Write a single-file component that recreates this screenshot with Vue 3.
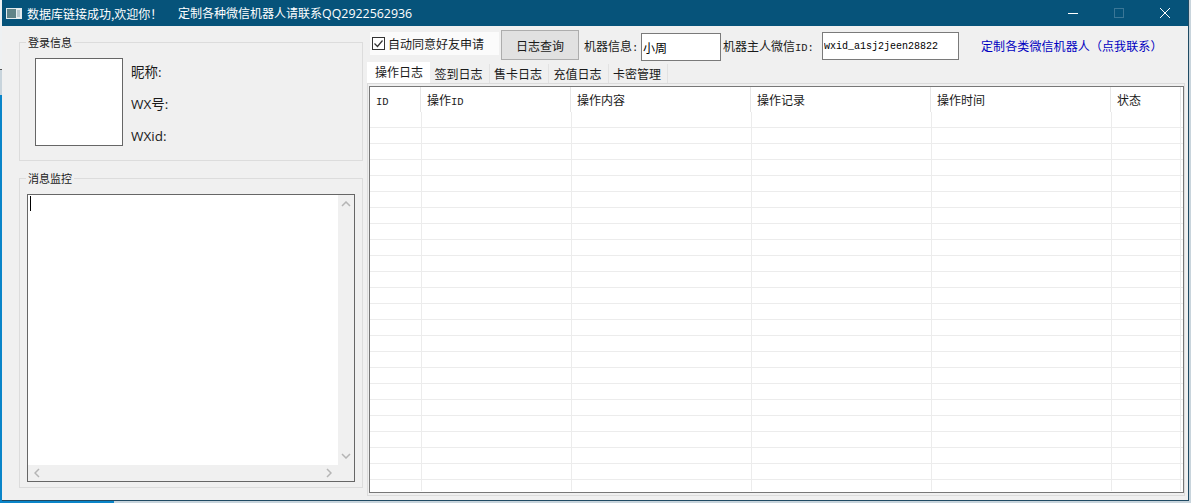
<script setup>
const tabs = ['操作日志', '签到日志', '售卡日志', '充值日志', '卡密管理']
const columns = [
  { label: 'ID', mono: true, width: 52, headWidth: 51 },
  { label: '操作', suffix: 'ID', width: 150, headWidth: 150 },
  { label: '操作内容', width: 180, headWidth: 180 },
  { label: '操作记录', width: 180, headWidth: 180 },
  { label: '操作时间', width: 180, headWidth: 180 },
  { label: '状态', width: 69, headWidth: 70 },
]
const rows = Array.from({ length: 23 }, (_, i) => i)
</script>

<template>
  <div class="desktop">
    <div class="window">
      <header class="titlebar">
        <svg class="app-icon" width="16" height="11" viewBox="0 0 16 11">
          <rect width="16" height="11" fill="#e4ebee" />
          <rect x="1" y="1" width="9" height="9" fill="#5f8388" />
          <rect x="11" y="2" width="3" height="7" fill="#b6c8cf" />
        </svg>
        <span class="title-a">数据库链接成功,欢迎你！</span>
        <span class="title-b">定制各种微信机器人请联系<span class="qq">QQ2922562936</span></span>
        <div class="win-btns">
          <svg width="12" height="12" viewBox="0 0 12 12"><path d="M1 6.5h10" stroke="#fff" /></svg>
          <svg width="12" height="12" viewBox="0 0 12 12"><rect x="1.5" y="1.5" width="9" height="9" fill="none" stroke="#3a7696" /></svg>
          <svg width="12" height="12" viewBox="0 0 12 12"><path d="M1 1l10 10M11 1L1 11" stroke="#fff" /></svg>
        </div>
      </header>

      <div class="body">
        <aside class="left">
          <fieldset class="group login">
            <legend>登录信息</legend>
            <div class="avatar"></div>
            <div class="info">
              <span>昵称:</span>
              <span>WX号:</span>
              <span>WXid:</span>
            </div>
          </fieldset>
          <fieldset class="group monitor">
            <legend>消息监控</legend>
            <div class="textarea">
              <div class="text-main"><i class="caret"></i></div>
              <div class="vbar">
                <svg width="10" height="6" viewBox="0 0 10 6"><path d="M1 5l4-4 4 4" fill="none" stroke="#b5b5b5" stroke-width="1.5" /></svg>
                <svg width="10" height="6" viewBox="0 0 10 6"><path d="M1 1l4 4 4-4" fill="none" stroke="#b5b5b5" stroke-width="1.5" /></svg>
              </div>
              <div class="hbar">
                <svg width="6" height="10" viewBox="0 0 6 10"><path d="M5 1L1 5l4 4" fill="none" stroke="#b5b5b5" stroke-width="1.5" /></svg>
                <svg width="6" height="10" viewBox="0 0 6 10"><path d="M1 1l4 4-4 4" fill="none" stroke="#b5b5b5" stroke-width="1.5" /></svg>
              </div>
            </div>
          </fieldset>
        </aside>

        <main class="right">
          <div class="toolbar">
            <label class="check">
              <svg width="13" height="13" viewBox="0 0 13 13">
                <rect x="0.5" y="0.5" width="12" height="12" fill="#fff" stroke="#333" />
                <path d="M2.5 6.5l3 3 5-6" fill="none" stroke="#333" stroke-width="1.2" />
              </svg>
              自动同意好友申请
            </label>
            <button class="query">日志查询</button>
            <span class="lbl-info">机器信息<em>:</em></span>
            <input class="input name" value="小周" />
            <span class="lbl-owner">机器主人微信<em>ID:</em></span>
            <input class="input wxid" value="wxid_a1sj2jeen28822" />
            <a class="link">定制各类微信机器人（点我联系）</a>
          </div>

          <div class="tabs">
            <div v-for="(t, i) in tabs" :key="t" class="tab" :class="{ active: i === 0 }">{{ t }}</div>
          </div>

          <div class="panel">
            <div class="table">
              <div class="thead">
                <div v-for="c in columns" :key="c.label" class="th" :style="{ width: c.headWidth + 'px' }">
                  <em v-if="c.mono">{{ c.label }}</em>
                  <template v-else>{{ c.label }}<em v-if="c.suffix">{{ c.suffix }}</em></template>
                </div>
              </div>
              <div v-for="r in rows" :key="r" class="tr">
                <div v-for="c in columns" :key="c.label" class="td" :style="{ width: c.width + 'px' }"></div>
              </div>
              <div class="tr filler">
                <div v-for="c in columns" :key="c.label" class="td" :style="{ width: c.width + 'px' }"></div>
              </div>
            </div>
          </div>
        </main>
      </div>
    </div>
  </div>
</template>

<style>
html, body {
  margin: 0;
  background: #c8d4dc;
  overflow: hidden;
}
</style>

<style scoped>
.desktop {
  width: 1191px;
  height: 503px;
  overflow: hidden;
  background:
    linear-gradient(#eef1f3 69px, #555 69px, #555 70px, #c8d4dc 70px, #c8d4dc 95px, #0a85c9 95px) 0 0 / 2px 100% no-repeat,
    linear-gradient(to right, #0a85c9 114px, #c8d4dc 114px);
  font-family: "Noto Sans CJK SC", "Liberation Sans", sans-serif;
  font-size: 12px;
  color: #1a1a1a;
}

.window {
  margin-left: 2px;
  width: 1186px;
  height: 500px;
  background: #f0f0f0;
  border-right: 1px solid #1f4a63;
  border-bottom: 1px solid #1f4a63;
  display: flex;
  flex-direction: column;
}

.titlebar {
  height: 26px;
  padding-left: 4px;
  background: #06537a;
  color: #fff;
  display: flex;
  align-items: center;
  flex-shrink: 0;
}

.app-icon {
  margin-right: 5px;
}

.title-a {
  width: 151px;
}

.qq {
  font-family: "Open Sans", sans-serif;
  font-size: 12.4px;
}

.win-btns {
  margin-left: auto;
  margin-right: 17px;
  display: flex;
  gap: 34px;
}

.body {
  flex: 1;
  display: flex;
  min-height: 0;
}

.left {
  width: 366px;
  padding: 16px 0 0 17px;
  box-sizing: border-box;
  flex-shrink: 0;
}

.group {
  margin: 0;
  padding: 0;
  width: 344px;
  box-sizing: border-box;
  border: 1px solid #dcdcdc;
}

.group legend {
  margin-left: 6px;
  padding: 0 2px;
  font-size: 11px;
  line-height: 14px;
}

.login {
  height: 126px;
  margin-top: -7px;
  display: flex;
}

.avatar {
  width: 86px;
  height: 86px;
  margin: 9px 0 0 15px;
  background: #fff;
  border: 1px solid #666;
  flex-shrink: 0;
}

.info {
  margin: 14px 0 0 8px;
  display: flex;
  flex-direction: column;
  gap: 14px;
  font-size: 13.5px;
  line-height: 18px;
  font-family: "Open Sans", "Noto Sans CJK SC", sans-serif;
}

.monitor {
  height: 317px;
  margin-top: 10px;
}

.textarea {
  width: 326px;
  height: 286px;
  margin: 9px 0 0 7px;
  background: #f0f0f0;
  border: 1px solid #666;
  display: grid;
  grid-template-columns: 1fr 16px;
  grid-template-rows: 1fr 16px;
}

.text-main {
  background: #fff;
  padding: 1px 0 0 2px;
}

.caret {
  display: block;
  width: 1px;
  height: 15px;
  background: #000;
}

.vbar {
  display: flex;
  flex-direction: column;
  justify-content: space-between;
  align-items: center;
  padding: 6px 0 6px;
}

.hbar {
  display: flex;
  justify-content: space-between;
  align-items: center;
  padding: 0 6px;
  grid-column: 1 / 2;
}

.right {
  flex: 1;
  min-width: 0;
  padding-top: 4px;
}

.toolbar {
  height: 32px;
  display: flex;
  align-items: center;
  white-space: nowrap;
}

.check {
  width: 129px;
  height: 23px;
  margin: 0 0 5px 2px;
  padding-left: 2px;
  box-sizing: border-box;
  background: #fbfbfb;
  display: flex;
  align-items: center;
  gap: 3px;
}

.query {
  width: 78px;
  height: 30px;
  margin: 0 0 2px 2px;
  padding: 0;
  background: #e1e1e1;
  border: 1px solid #adadad;
  font: inherit;
  color: inherit;
}

.lbl-info {
  margin: 0 0 2px 5px;
  width: 57px;
}

.lbl-info em,
.lbl-owner em,
.th em {
  font-family: "Liberation Mono", monospace;
  font-style: normal;
  font-size: 10.5px;
}

.input {
  height: 28px;
  box-sizing: border-box;
  border: 1px solid #7a7a7a;
  background: #fff;
  padding: 0 1px;
  font: inherit;
  color: #000;
  outline: none;
}

.name {
  width: 80px;
  margin-top: 2px;
}

.lbl-owner {
  margin: 0 0 2px 2px;
  width: 99px;
}

.wxid {
  width: 137px;
  font-family: "Liberation Mono", monospace;
  font-size: 10px;
}

.link {
  margin: 0 0 2px 22px;
  color: #0000c0;
  letter-spacing: 0.1px;
}

.tabs {
  display: flex;
  align-items: flex-end;
  height: 21px;
  margin-left: -1px;
  position: relative;
  z-index: 1;
}

.tab {
  width: 59.5px;
  height: 19px;
  padding-left: 4.5px;
  line-height: 19px;
  background: #f0f0f0;
  border-right: 1px solid #e2e2e2;
  box-sizing: border-box;
}

.tab.active {
  width: 63px;
  height: 21px;
  padding-left: 8px;
  line-height: 20px;
  background: #fff;
  border-right: none;
}

.panel {
  margin: 0 3px 0 -1px;
  height: 413px;
  box-sizing: border-box;
  border: 1px solid #dcdcdc;
  padding: 2px 0 0 1px;
}

.table {
  width: 815px;
  height: 407px;
  box-sizing: border-box;
  border: 1px solid #777;
  background: #fff;
  overflow: hidden;
}

.thead,
.tr {
  display: flex;
}

.thead {
  height: 25px;
}

.th {
  height: 25px;
  padding: 4px 0 0 6px;
  box-sizing: border-box;
  border-right: 1px solid #e6e6e6;
  line-height: 17px;
}

.tr {
  height: 16px;
  box-sizing: border-box;
  border-bottom: 1px solid #ececec;
}

.tr.filler {
  height: 11px;
  border-bottom: none;
}

.td {
  box-sizing: border-box;
  border-right: 1px solid #ececec;
}
</style>
